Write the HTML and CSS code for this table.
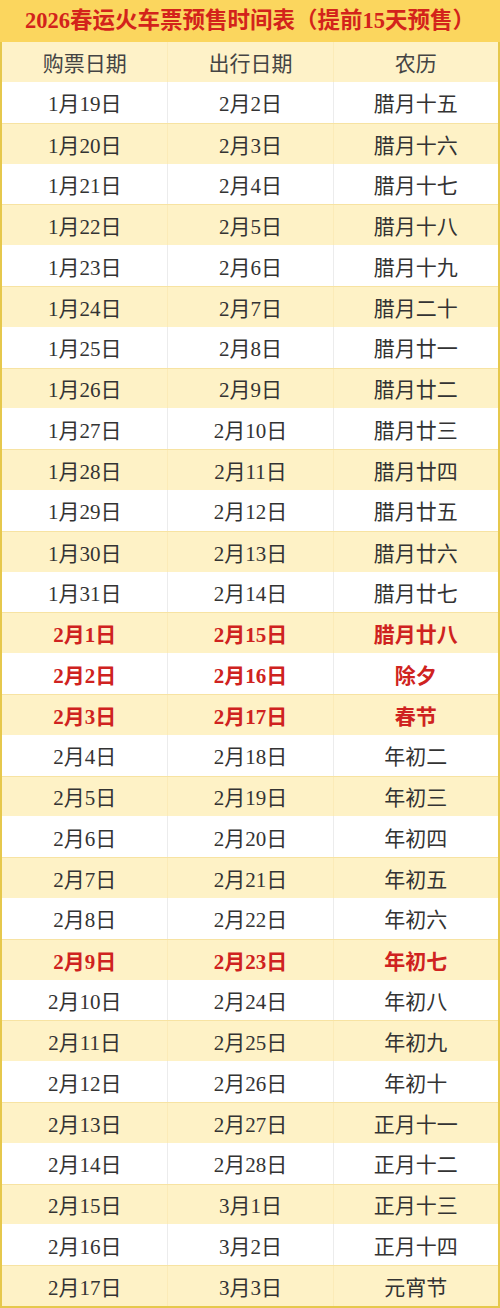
FILE: index.html
```html
<!DOCTYPE html>
<html lang="zh">
<head>
<meta charset="utf-8">
<title>2026春运火车票预售时间表</title>
<link rel="stylesheet" href="styles.css">
</head>
<body>
<div class="sheet">
  <div class="title">2026春运火车票预售时间表（提前15天预售）</div>
  <div class="table">
    <div class="row head"><div class="cell">购票日期</div><div class="cell">出行日期</div><div class="cell">农历</div></div>
    <div class="row"><div class="cell">1月19日</div><div class="cell">2月2日</div><div class="cell">腊月十五</div></div>
    <div class="row alt"><div class="cell">1月20日</div><div class="cell">2月3日</div><div class="cell">腊月十六</div></div>
    <div class="row"><div class="cell">1月21日</div><div class="cell">2月4日</div><div class="cell">腊月十七</div></div>
    <div class="row alt"><div class="cell">1月22日</div><div class="cell">2月5日</div><div class="cell">腊月十八</div></div>
    <div class="row"><div class="cell">1月23日</div><div class="cell">2月6日</div><div class="cell">腊月十九</div></div>
    <div class="row alt"><div class="cell">1月24日</div><div class="cell">2月7日</div><div class="cell">腊月二十</div></div>
    <div class="row"><div class="cell">1月25日</div><div class="cell">2月8日</div><div class="cell">腊月廿一</div></div>
    <div class="row alt"><div class="cell">1月26日</div><div class="cell">2月9日</div><div class="cell">腊月廿二</div></div>
    <div class="row"><div class="cell">1月27日</div><div class="cell">2月10日</div><div class="cell">腊月廿三</div></div>
    <div class="row alt"><div class="cell">1月28日</div><div class="cell">2月11日</div><div class="cell">腊月廿四</div></div>
    <div class="row"><div class="cell">1月29日</div><div class="cell">2月12日</div><div class="cell">腊月廿五</div></div>
    <div class="row alt"><div class="cell">1月30日</div><div class="cell">2月13日</div><div class="cell">腊月廿六</div></div>
    <div class="row"><div class="cell">1月31日</div><div class="cell">2月14日</div><div class="cell">腊月廿七</div></div>
    <div class="row alt hot"><div class="cell">2月1日</div><div class="cell">2月15日</div><div class="cell">腊月廿八</div></div>
    <div class="row hot"><div class="cell">2月2日</div><div class="cell">2月16日</div><div class="cell">除夕</div></div>
    <div class="row alt hot"><div class="cell">2月3日</div><div class="cell">2月17日</div><div class="cell">春节</div></div>
    <div class="row"><div class="cell">2月4日</div><div class="cell">2月18日</div><div class="cell">年初二</div></div>
    <div class="row alt"><div class="cell">2月5日</div><div class="cell">2月19日</div><div class="cell">年初三</div></div>
    <div class="row"><div class="cell">2月6日</div><div class="cell">2月20日</div><div class="cell">年初四</div></div>
    <div class="row alt"><div class="cell">2月7日</div><div class="cell">2月21日</div><div class="cell">年初五</div></div>
    <div class="row"><div class="cell">2月8日</div><div class="cell">2月22日</div><div class="cell">年初六</div></div>
    <div class="row alt hot"><div class="cell">2月9日</div><div class="cell">2月23日</div><div class="cell">年初七</div></div>
    <div class="row"><div class="cell">2月10日</div><div class="cell">2月24日</div><div class="cell">年初八</div></div>
    <div class="row alt"><div class="cell">2月11日</div><div class="cell">2月25日</div><div class="cell">年初九</div></div>
    <div class="row"><div class="cell">2月12日</div><div class="cell">2月26日</div><div class="cell">年初十</div></div>
    <div class="row alt"><div class="cell">2月13日</div><div class="cell">2月27日</div><div class="cell">正月十一</div></div>
    <div class="row"><div class="cell">2月14日</div><div class="cell">2月28日</div><div class="cell">正月十二</div></div>
    <div class="row alt"><div class="cell">2月15日</div><div class="cell">3月1日</div><div class="cell">正月十三</div></div>
    <div class="row"><div class="cell">2月16日</div><div class="cell">3月2日</div><div class="cell">正月十四</div></div>
    <div class="row alt"><div class="cell">2月17日</div><div class="cell">3月3日</div><div class="cell">元宵节</div></div>
  </div>
</div>
</body>
</html>
```
FILE: styles.css
```css
html, body {
  margin: 0;
  padding: 0;
  background: #ffffff;
}
body {
  font-family: "Liberation Serif", "Noto Sans CJK SC", serif;
  color: #333333;
}
.sheet {
  width: 500px;
  box-sizing: border-box;
}
.title {
  height: 42px;
  line-height: 42px;
  background: #fbd65e;
  color: #d3231b;
  font-weight: bold;
  font-size: 22.5px;
  text-align: center;
}
.table {
  border: 2px solid #e6c84c;
  border-top: none;
}
.row {
  display: grid;
  grid-template-columns: 1fr 1fr 1fr;
  height: 40.8px;
  box-sizing: border-box;
  background: #ffffff;
}
.row.head {
  height: 40px;
  background: #fef2c8;
  color: #444444;
}
.row.alt {
  background: #fef2c6;
  border-top: 1px solid #f7e3a2;
}
.cell {
  display: flex;
  align-items: center;
  justify-content: center;
  font-size: 21px;
  border-left: 1px solid #ececec;
}
.cell:first-child {
  border-left: none;
}
.row.head .cell,
.row.alt .cell {
  border-left-color: #fbebb8;
}
.row.hot .cell {
  color: #cf2220;
  font-weight: bold;
}
```
